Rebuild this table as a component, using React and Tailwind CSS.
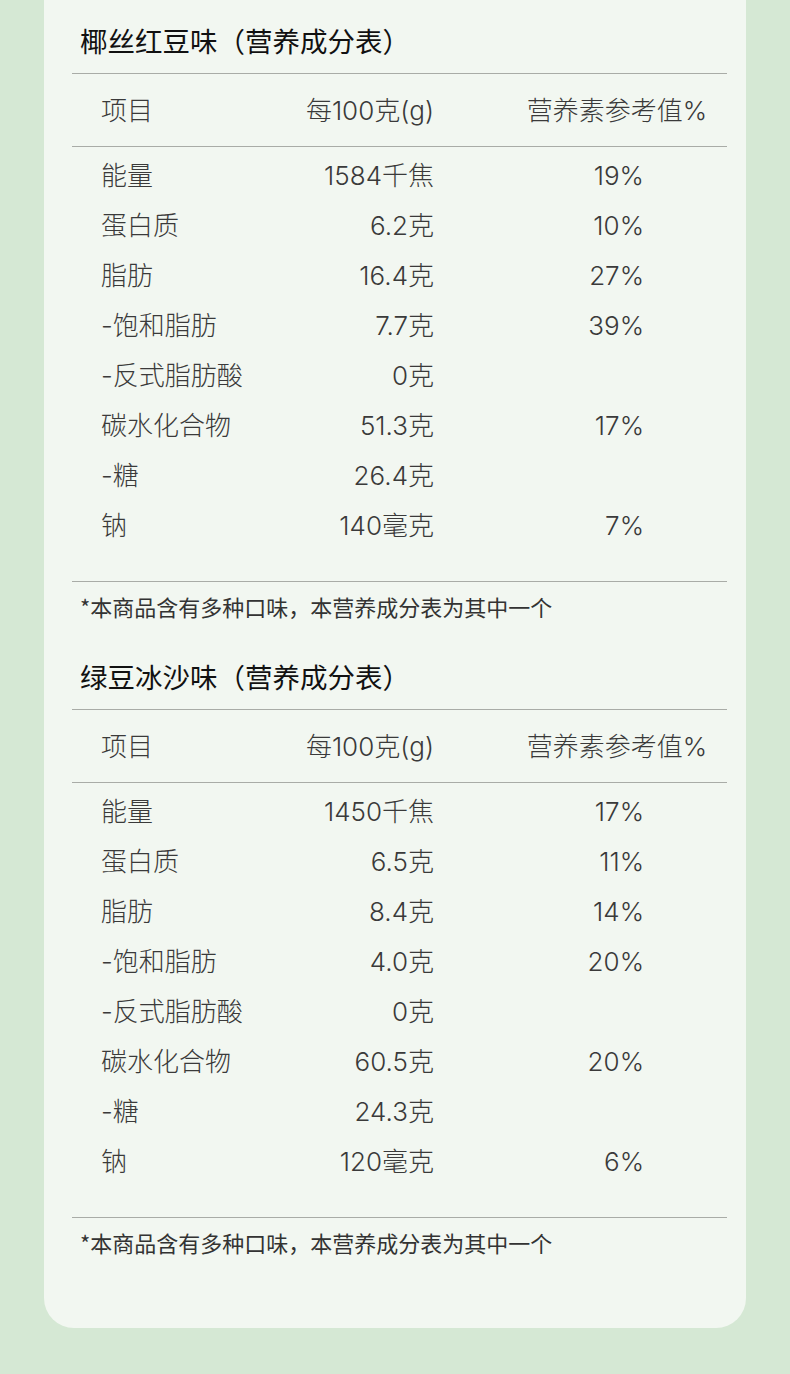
const tables = [
  {
    title: '椰丝红豆味（营养成分表）',
    rows: [
      ['能量', '1584千焦', '19%'],
      ['蛋白质', '6.2克', '10%'],
      ['脂肪', '16.4克', '27%'],
      ['-饱和脂肪', '7.7克', '39%'],
      ['-反式脂肪酸', '0克', ''],
      ['碳水化合物', '51.3克', '17%'],
      ['-糖', '26.4克', ''],
      ['钠', '140毫克', '7%'],
    ],
  },
  {
    title: '绿豆冰沙味（营养成分表）',
    rows: [
      ['能量', '1450千焦', '17%'],
      ['蛋白质', '6.5克', '11%'],
      ['脂肪', '8.4克', '14%'],
      ['-饱和脂肪', '4.0克', '20%'],
      ['-反式脂肪酸', '0克', ''],
      ['碳水化合物', '60.5克', '20%'],
      ['-糖', '24.3克', ''],
      ['钠', '120毫克', '6%'],
    ],
  },
];

const rule = 'h-px bg-[#a9aca7]';
const cjk = { fontFamily: '"Noto Sans CJK SC", "Noto Sans", sans-serif' };

function NutritionTable({ title, rows, first }) {
  return (
    <section className={first ? '' : 'mt-[37px]'}>
      <h2 className="pl-2 text-[27.5px] leading-[36px] font-normal text-[#111]" style={cjk}>
        {title}
      </h2>
      <div className={`mt-[15px] ${rule}`} />
      <div className="flex h-[72px] items-center pl-[29px] text-[26px] font-light text-[#3a3a3a]">
        <span className="w-[150px]">项目</span>
        <span className="w-[183px] text-right">每100克(g)</span>
        <span className="w-[273px] text-right">营养素参考值%</span>
      </div>
      <div className={rule} />
      <div className="pt-[3px] pb-[31px] pl-[29px] text-[26px] font-light text-[#3a3a3a]">
        {rows.map(([name, value, pct]) => (
          <div key={name} className="flex h-[50px] items-center">
            <span className="w-[150px]">{name}</span>
            <span className="w-[183px] text-right">{value}</span>
            <span className="w-[210px] text-right">{pct}</span>
          </div>
        ))}
      </div>
      <div className={rule} />
      <p className="mt-[9px] pl-2 text-[22px] leading-[30px] text-[#333]" style={cjk}>
        *本商品含有多种口味，本营养成分表为其中一个
      </p>
    </section>
  );
}

export default function App() {
  return (
    <div
      className="min-h-[1374px] bg-[#d5e8d4] px-[44px] pb-[46px]"
      style={{ fontFamily: 'Inter, "Noto Sans CJK SC", sans-serif' }}
    >
      <div className="rounded-b-[30px] bg-[#f2f7f1] pt-[22px] pr-[19px] pb-[71px] pl-[28px]">
        {tables.map((t, i) => (
          <NutritionTable key={t.title} {...t} first={i === 0} />
        ))}
      </div>
    </div>
  );
}
